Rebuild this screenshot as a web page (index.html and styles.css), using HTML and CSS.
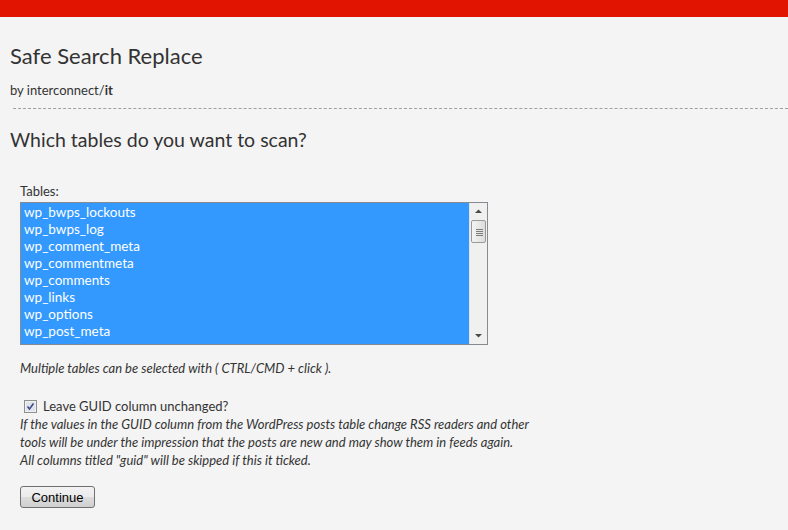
FILE: index.html
```html
<!DOCTYPE html>
<html>
<head>
<meta charset="utf-8">
<link rel="stylesheet" href="styles.css">
</head>
<body>
<div class="topbar"></div>
<div class="page">
  <h1 class="title">Safe Search Replace</h1>
  <p class="byline">by interconnect/<b>it</b></p>
  <hr class="divider">
  <h2 class="question">Which tables do you want to scan?</h2>
  <form class="form">
    <div class="label">Tables:</div>
    <div class="listbox">
      <div class="options">
        <div class="opt">wp_bwps_lockouts</div>
        <div class="opt">wp_bwps_log</div>
        <div class="opt">wp_comment_meta</div>
        <div class="opt">wp_commentmeta</div>
        <div class="opt">wp_comments</div>
        <div class="opt">wp_links</div>
        <div class="opt">wp_options</div>
        <div class="opt">wp_post_meta</div>
      </div>
      <div class="scrollbar">
        <svg class="arrow" width="17" height="16" viewBox="0 0 17 16"><path d="M5 10 L12 10 L8.5 6.5 Z" fill="#4a4a4a"/></svg>
        <div class="thumb">
          <svg width="15" height="23" viewBox="0 0 15 23"><g stroke="#7c7c7c" stroke-width="1"><line x1="4" y1="9.5" x2="11" y2="9.5"/><line x1="4" y1="11.5" x2="11" y2="11.5"/><line x1="4" y1="13.5" x2="11" y2="13.5"/><line x1="4" y1="15.5" x2="11" y2="15.5"/></g></svg>
        </div>
        <div class="track"></div>
        <svg class="arrow" width="17" height="16" viewBox="0 0 17 16"><path d="M5 6 L12 6 L8.5 9.5 Z" fill="#4a4a4a"/></svg>
      </div>
    </div>
    <p class="note">Multiple tables can be selected with ( CTRL/CMD + click ).</p>
    <label class="check">
      <span class="box"><svg width="13" height="13" viewBox="0 0 13 13"><rect x="0.5" y="0.5" width="12" height="12" fill="#f0f0f0" stroke="#8e8f8f"/><rect x="2" y="2" width="9" height="9" fill="#dfe3ea"/><path d="M3.5 6.5 L5.5 9 L9.5 3.5" fill="none" stroke="#3a4c8a" stroke-width="1.6"/></svg></span>
      <span class="checktext">Leave GUID column unchanged?</span>
    </label>
    <p class="help">If the values in the GUID column from the WordPress posts table change RSS readers and other<br>tools will be under the impression that the posts are new and may show them in feeds again.<br>All columns titled "guid" will be skipped if this it ticked.</p>
    <button type="button" class="btn">Continue</button>
  </form>
</div>
</body>
</html>
```
FILE: styles.css
```css
html, body {
  margin: 0;
  padding: 0;
  background: #f4f4f4;
}
body {
  font-family: Lato, "Open Sans", sans-serif;
  color: #333;
}
.topbar {
  height: 17px;
  background: #e01400;
}
.page {
  padding: 0 0 0 10px;
}
.title {
  margin: 24px 0 0 0;
  font-size: 22px;
  font-weight: normal;
  line-height: 30px;
  color: #333;
}
.byline {
  margin: 11px 0 0 0;
  font-size: 13px;
  line-height: 16px;
  color: #333;
}
.byline b {
  font-weight: bold;
}
.divider {
  margin: 10px 0 0 3px;
  border: 0;
  border-top: 1px dashed #a0a0a0;
  height: 0;
}
.question {
  margin: 19px 0 0 0;
  font-size: 19.5px;
  font-weight: normal;
  line-height: 24px;
  color: #333;
}
.form {
  padding: 31px 0 0 10px;
}
.label {
  font-size: 13px;
  line-height: 17px;
  color: #333;
}
.listbox {
  margin-top: 2px;
  width: 466px;
  height: 141px;
  border: 1px solid #868a91;
  background: #3399ff;
  display: flex;
  overflow: hidden;
}
.options {
  flex: 1;
  padding-top: 1px;
}
.opt {
  height: 17px;
  line-height: 17px;
  padding-left: 3px;
  font-size: 13.5px;
  color: #fff;
}
.scrollbar {
  width: 17px;
  background: #f0f0f0;
  border-left: 1px solid #e3e3e3;
  display: flex;
  flex-direction: column;
}
.arrow {
  display: block;
  flex: none;
}
.thumb {
  height: 23px;
  margin: 1px 1px 0 1px;
  border: 1px solid #9a9a9a;
  border-radius: 2px;
  background: linear-gradient(to right, #f4f4f4, #dcdcdc);
  box-sizing: border-box;
}
.thumb svg {
  display: block;
  margin-top: -1px;
}
.track {
  flex: 1;
}
.note {
  margin: 15px 0 0 0;
  font-size: 13px;
  font-style: italic;
  line-height: 16px;
}
.check {
  display: flex;
  align-items: center;
  margin-top: 21px;
  padding-left: 4px;
}
.box {
  display: block;
  width: 13px;
  height: 13px;
}
.box svg {
  display: block;
}
.checktext {
  margin-left: 6px;
  font-size: 13px;
  line-height: 18px;
}
.help {
  margin: 0;
  font-size: 13px;
  font-style: italic;
  line-height: 18px;
}
.btn {
  margin-top: 17px;
  width: 75px;
  height: 22px;
  padding: 0;
  font-family: "Liberation Sans", Arial, sans-serif;
  font-size: 13px;
  color: #000;
  border: 1px solid #707070;
  border-radius: 3px;
  background: linear-gradient(to bottom, #f2f2f2 0%, #ebebeb 50%, #dddddd 51%, #cfcfcf 100%);
}
```
